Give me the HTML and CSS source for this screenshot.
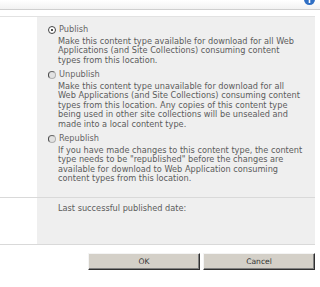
FILE: index.html
```html
<!DOCTYPE html>
<html lang="en">
<head>
    <meta charset="UTF-8">
    <title>Content Type Publishing</title>
    <link rel="stylesheet" href="styles.css">
</head>
<body>
    <div class="topbar">
        <svg class="info-icon" width="11" height="11" viewBox="0 0 11 11">
            <circle cx="5.5" cy="5.5" r="5.5" fill="#2f6fc4"/>
            <rect x="4.7" y="5" width="1.6" height="4" fill="#fff"/>
        </svg>
    </div>

    <div class="form">
        <div class="section">
            <div class="section-label"></div>
            <div class="section-body options">
                <div class="option">
                    <label class="option-title"><span class="radio checked"></span>Publish</label>
                    <p class="option-desc">Make this content type available for download for all Web Applications (and Site Collections) consuming content types from this location.</p>
                </div>
                <div class="option">
                    <label class="option-title"><span class="radio"></span>Unpublish</label>
                    <p class="option-desc">Make this content type unavailable for download for all Web Applications (and Site Collections) consuming content types from this location. Any copies of this content type being used in other site collections will be unsealed and made into a local content type.</p>
                </div>
                <div class="option">
                    <label class="option-title"><span class="radio"></span>Republish</label>
                    <p class="option-desc">If you have made changes to this content type, the content type needs to be "republished" before the changes are available for download to Web Application consuming content types from this location.</p>
                </div>
            </div>
        </div>
        <div class="section">
            <div class="section-label"></div>
            <div class="section-body last-date">Last successful published date:</div>
        </div>
    </div>

    <div class="buttons">
        <button class="btn">OK</button>
        <button class="btn">Cancel</button>
    </div>
</body>
</html>
```

FILE: styles.css
```css
body {
    margin: 0;
    padding: 0;
    width: 320px;
    background: #fff;
    font-family: "DejaVu Sans", Verdana, sans-serif;
    font-size: 8.2px;
    color: #5c5c5c;
}
.topbar {
    position: relative;
    height: 9px;
    background: linear-gradient(#ffffff, #f2f2f2);
    border-bottom: 1px solid #cfcfcf;
    margin-bottom: 6px;
}
.info-icon {
    position: absolute;
    right: 5px;
    top: -6px;
}
.form {
    width: 315px;
    border-top: 1px solid #e2e2e2;
}
.section {
    display: flex;
    border-bottom: 1px solid #d9d9d9;
}
.section-label {
    width: 37px;
    flex-shrink: 0;
}
.section-body {
    flex: 1;
    background: #efefef;
}
.options {
    padding: 8px 11px 13px 11px;
}
.option + .option {
    margin-top: 5px;
}
.option-title {
    display: flex;
    align-items: center;
    line-height: 9.5px;
    color: #666;
}
.radio {
    width: 6px;
    height: 6px;
    border-radius: 50%;
    border: 1px solid #b0b0b0;
    border-left-color: #444;
    border-top-color: #666;
    background: #e2e2e2;
    margin-right: 3px;
    position: relative;
}
.radio.checked {
    border-color: #444;
    background: #fff;
}
.radio.checked::after {
    content: "";
    position: absolute;
    left: 2px;
    top: 2px;
    width: 2px;
    height: 2px;
    border-radius: 50%;
    background: #111;
}
.option-desc {
    margin: 2px 0 0 10px;
    line-height: 9.5px;
}
.last-date {
    height: 46px;
    box-sizing: border-box;
    padding: 6px 10px 0 21px;
    line-height: 9.5px;
}
.buttons {
    display: flex;
    justify-content: flex-end;
    gap: 3px;
    width: 315px;
    margin-top: 8px;
}
.btn {
    width: 112px;
    height: 17px;
    padding: 0;
    background: #d4d0c8;
    border: 1px solid;
    border-color: #f4f4f4 #303030 #303030 #f4f4f4;
    box-shadow: inset -1px -1px 0 #808080;
    font-family: "DejaVu Sans", Verdana, sans-serif;
    font-size: 7.6px;
    color: #333;
}
```
